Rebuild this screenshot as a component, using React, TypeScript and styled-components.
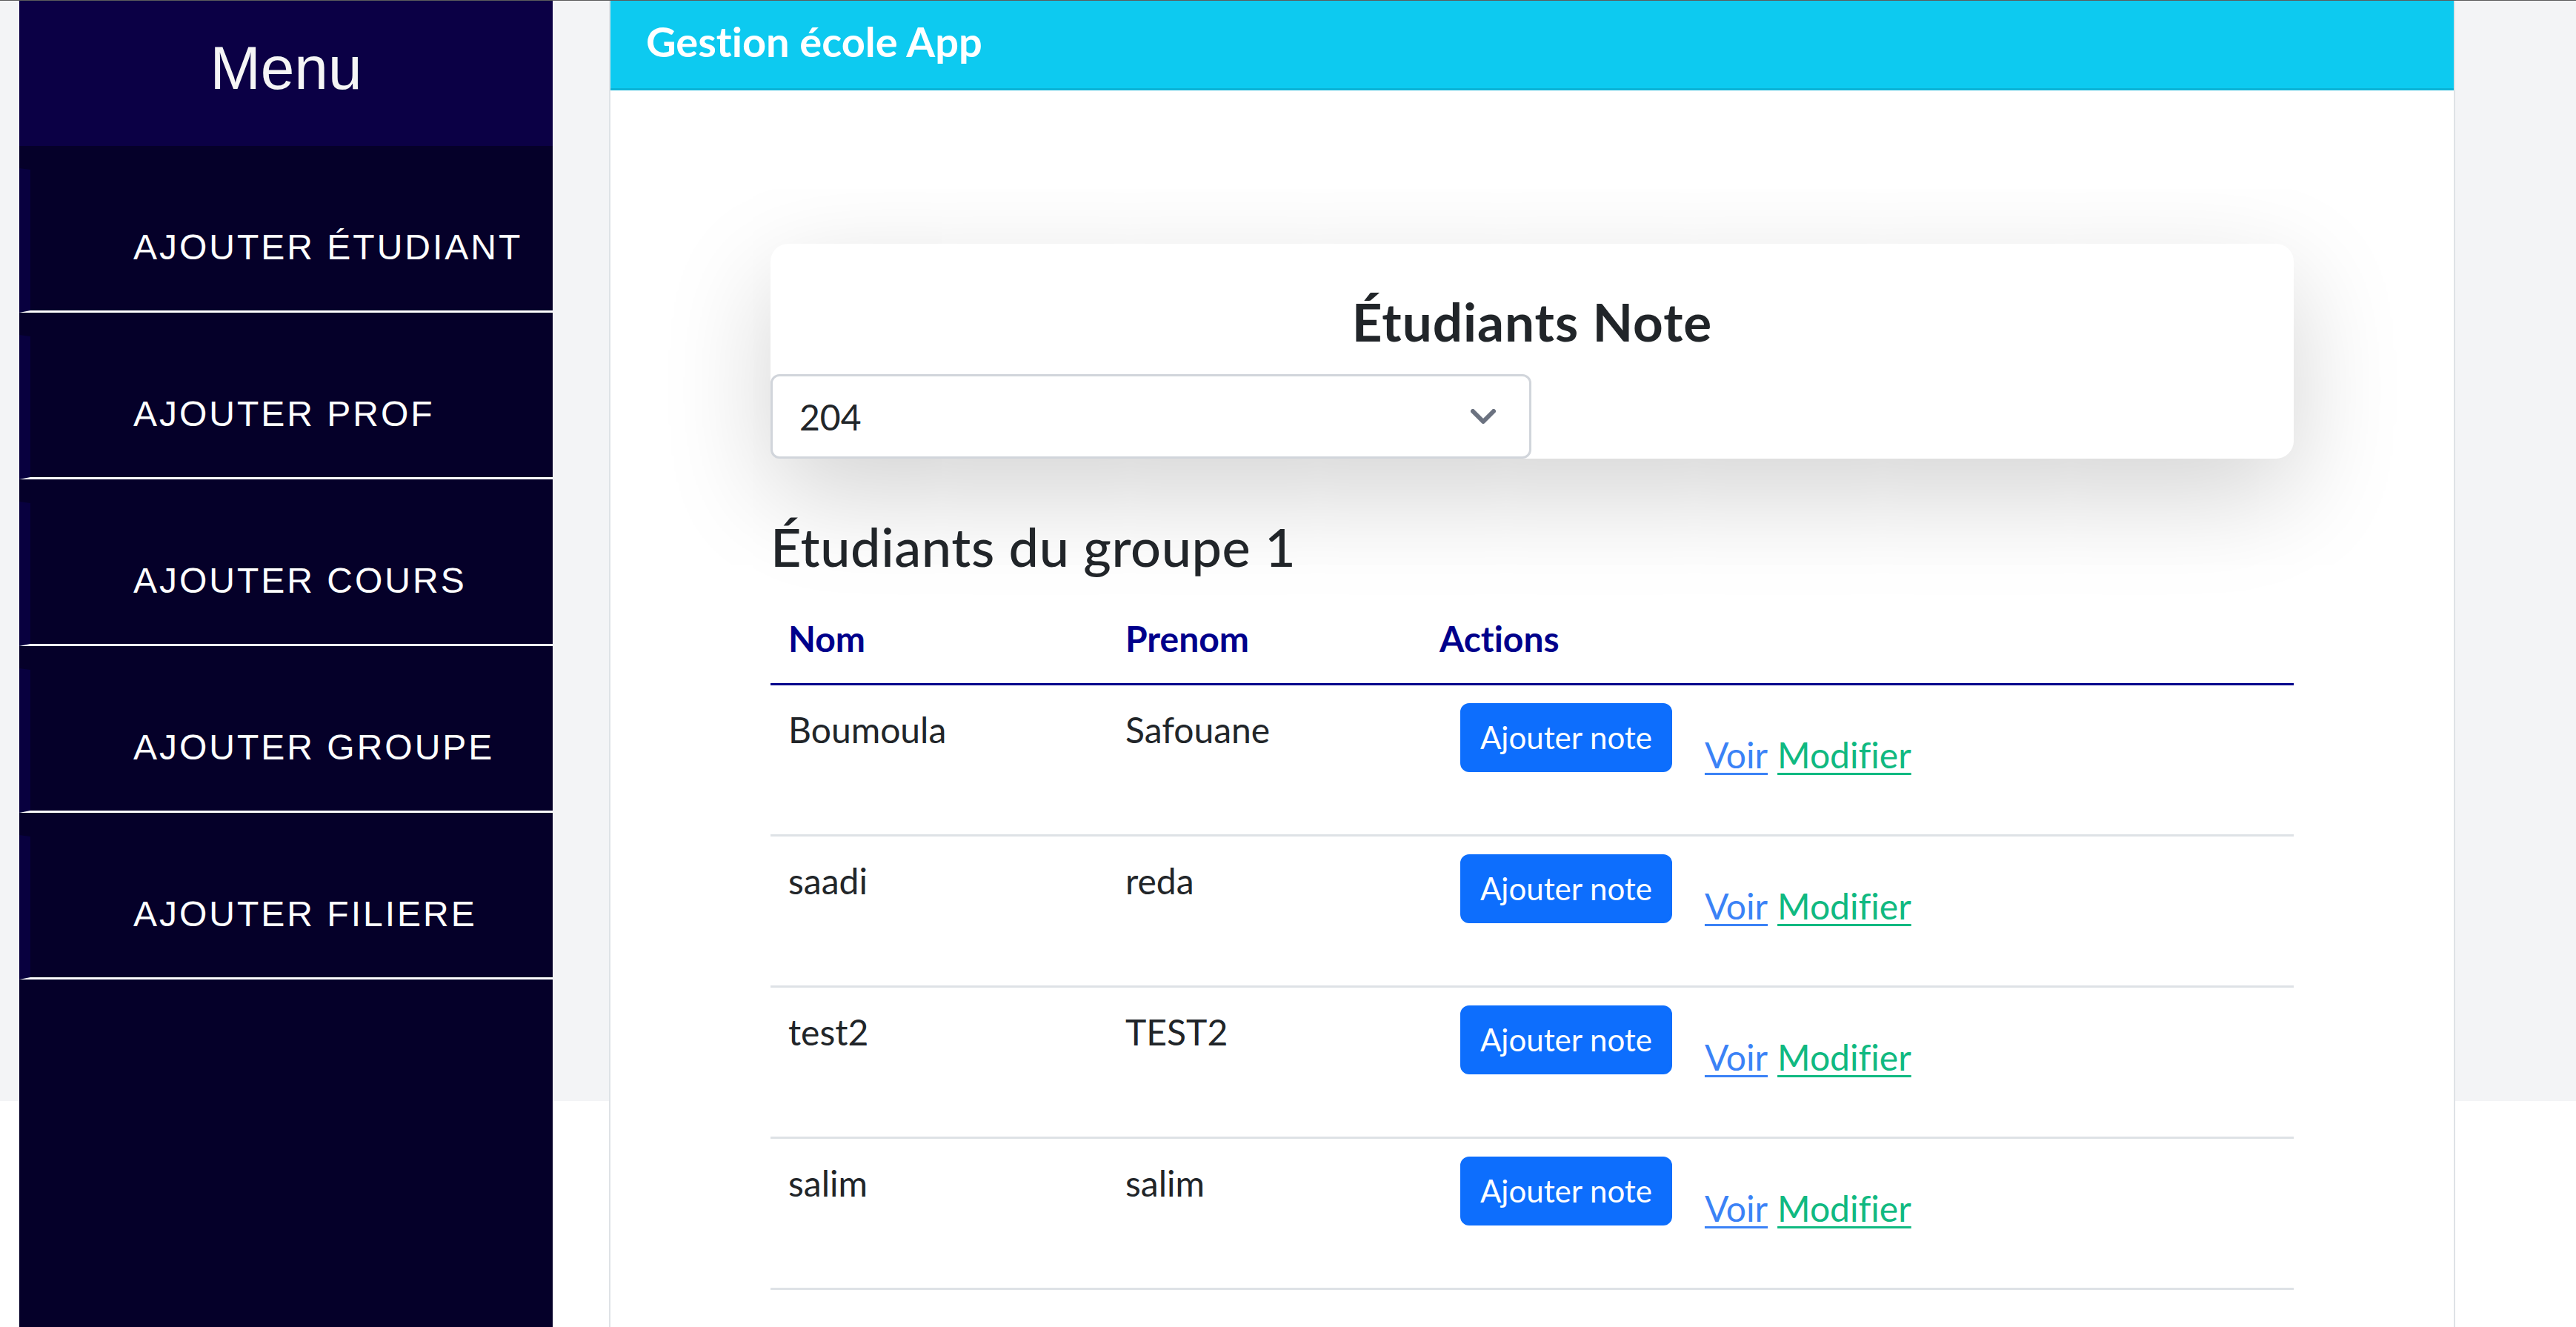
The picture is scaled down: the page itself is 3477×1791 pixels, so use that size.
import React from "react";
import styled, { createGlobalStyle } from "styled-components";

const GlobalStyle = createGlobalStyle`
  *, *::before, *::after { box-sizing: border-box; }
  html, body { margin: 0; padding: 0; }
  body {
    background: #ffffff;
    border-top: 1px solid #5c5c5c;
    font-family: Lato, "Noto Sans", "Liberation Sans", sans-serif;
    font-variant-ligatures: no-common-ligatures;
    color: #212529;
  }
`;

const Shell = styled.div`
  display: flex;
  align-items: stretch;
  min-height: 1790px;
  padding-left: 26px;
  gap: 76px;
  background: linear-gradient(to bottom, #f3f4f6 0, #f3f4f6 1485px, #ffffff 1485px);
`;

const Sidebar = styled.nav`
  width: 720px;
  flex-shrink: 0;
  background: #050029;
  font-family: "Liberation Sans", Arial, sans-serif;
`;

const SideHeader = styled.div`
  height: 196px;
  padding-top: 44px;
  background: #0b0045;
  color: #f5f5f5;
  font-size: 82px;
  line-height: normal;
  text-align: center;
`;

const SideList = styled.ul`
  list-style: none;
  margin: 0;
  padding: 0;
`;

const SideItem = styled.li`
  margin-top: 30px;
  height: 195px;
  padding: 77px 0 0 139px;
  border-top: 2px solid #050029;
  border-left: 15px solid #08003f;
  border-bottom: 3px solid #ffffff;
  color: #ffffff;
  font-size: 48px;
  line-height: normal;
  letter-spacing: 3px;
  text-transform: uppercase;
  white-space: nowrap;
`;

const Card = styled.main`
  width: 2492px;
  flex-shrink: 0;
  background: #ffffff;
  border-left: 2px solid #dee2e6;
  border-right: 2px solid #dee2e6;
`;

const TopBar = styled.header`
  height: 121px;
  padding: 21px 48px 0;
  background: #0dcaf0;
  border-bottom: 3px solid #0bb3d6;
  color: #ffffff;
  font-size: 56px;
  font-weight: 700;
  line-height: 1.2;
`;

const Body = styled.div`
  padding: 207px 0 60px;
`;

const Container = styled.div`
  width: 2056px;
  margin: 0 auto;
`;

const Panel = styled.section`
  padding-top: 62px;
  border-radius: 24px;
  background: #ffffff;
  box-shadow: 0 48px 144px rgba(0, 0, 0, 0.175);
`;

const PanelTitle = styled.h2`
  margin: 0 0 29px;
  font-size: 71px;
  font-weight: 700;
  line-height: 1.2;
  letter-spacing: 1px;
  text-align: center;
  color: #212529;
`;

const SelectBox = styled.div`
  display: flex;
  align-items: center;
  justify-content: space-between;
  width: 1027px;
  height: 114px;
  padding: 0 45px 0 36px;
  border: 3px solid #d1d5db;
  border-radius: 12px;
  background: #ffffff;
  font-size: 48px;
  color: #212529;
`;

const Chevron = styled.svg`
  width: 34px;
  height: 20px;
  display: block;
`;

const SectionTitle = styled.h3`
  margin: 75px 0 21px;
  font-size: 72px;
  font-weight: 500;
  line-height: 1.2;
  letter-spacing: 0.6px;
  color: #212529;
`;

const Table = styled.table`
  width: 100%;
  border-collapse: collapse;
  table-layout: fixed;
  font-size: 48px;
  line-height: 72px;
`;

const Th = styled.th`
  padding: 24px;
  text-align: left;
  font-weight: 700;
  color: #00008b;
  border-bottom: 3px solid #00008b;
`;

const Td = styled.td`
  padding: 24px;
  vertical-align: top;
  color: #212529;
  border-bottom: 3px solid #dee2e6;
`;

const Actions = styled.div`
  display: flex;
  align-items: flex-start;
  min-height: 153px;
`;

const NoteButton = styled.button`
  margin-left: 28px;
  height: 93px;
  padding: 0 24px;
  border: 3px solid #0d6efd;
  border-radius: 12px;
  background: #0d6efd;
  color: #ffffff;
  font-family: Lato, "Noto Sans", sans-serif;
  font-size: 42px;
  line-height: 63px;
  white-space: nowrap;
`;

const Links = styled.div`
  display: flex;
  gap: 13px;
  margin: 34px 0 0 44px;
`;

const ActionLink = styled.a<{ $tone: string }>`
  color: ${(p) => p.$tone};
  text-decoration: underline;
  text-decoration-thickness: 3px;
  text-underline-offset: 6px;
  cursor: pointer;
`;

const students = [
  { nom: "Boumoula", prenom: "Safouane" },
  { nom: "saadi", prenom: "reda" },
  { nom: "test2", prenom: "TEST2" },
  { nom: "salim", prenom: "salim" },
];

const menu = [
  "Ajouter Étudiant",
  "Ajouter Prof",
  "Ajouter Cours",
  "Ajouter Groupe",
  "Ajouter Filiere",
];

export default function App() {
  return (
    <>
      <GlobalStyle />
      <Shell>
        <Sidebar>
          <SideHeader>Menu</SideHeader>
          <SideList>
            {menu.map((m) => (
              <SideItem key={m}>{m}</SideItem>
            ))}
          </SideList>
        </Sidebar>
        <Card>
          <TopBar>Gestion école App</TopBar>
          <Body>
            <Container>
              <Panel>
                <PanelTitle>Étudiants Note</PanelTitle>
                <SelectBox role="combobox">
                  <span>204</span>
                  <Chevron viewBox="0 0 34 20" fill="none">
                    <polyline
                      points="3,3 17,17 31,3"
                      stroke="#6b7280"
                      strokeWidth="6"
                      strokeLinecap="round"
                      strokeLinejoin="round"
                    />
                  </Chevron>
                </SelectBox>
              </Panel>
              <SectionTitle>Étudiants du groupe 1</SectionTitle>
              <Table>
                <colgroup>
                  <col style={{ width: 455 }} />
                  <col style={{ width: 424 }} />
                  <col />
                </colgroup>
                <thead>
                  <tr>
                    <Th>Nom</Th>
                    <Th>Prenom</Th>
                    <Th>Actions</Th>
                  </tr>
                </thead>
                <tbody>
                  {students.map((s) => (
                    <tr key={s.nom}>
                      <Td>{s.nom}</Td>
                      <Td>{s.prenom}</Td>
                      <Td>
                        <Actions>
                          <NoteButton>Ajouter note</NoteButton>
                          <Links>
                            <ActionLink $tone="#3b82f6">Voir</ActionLink>
                            <ActionLink $tone="#10b981">Modifier</ActionLink>
                          </Links>
                        </Actions>
                      </Td>
                    </tr>
                  ))}
                </tbody>
              </Table>
            </Container>
          </Body>
        </Card>
      </Shell>
    </>
  );
}
